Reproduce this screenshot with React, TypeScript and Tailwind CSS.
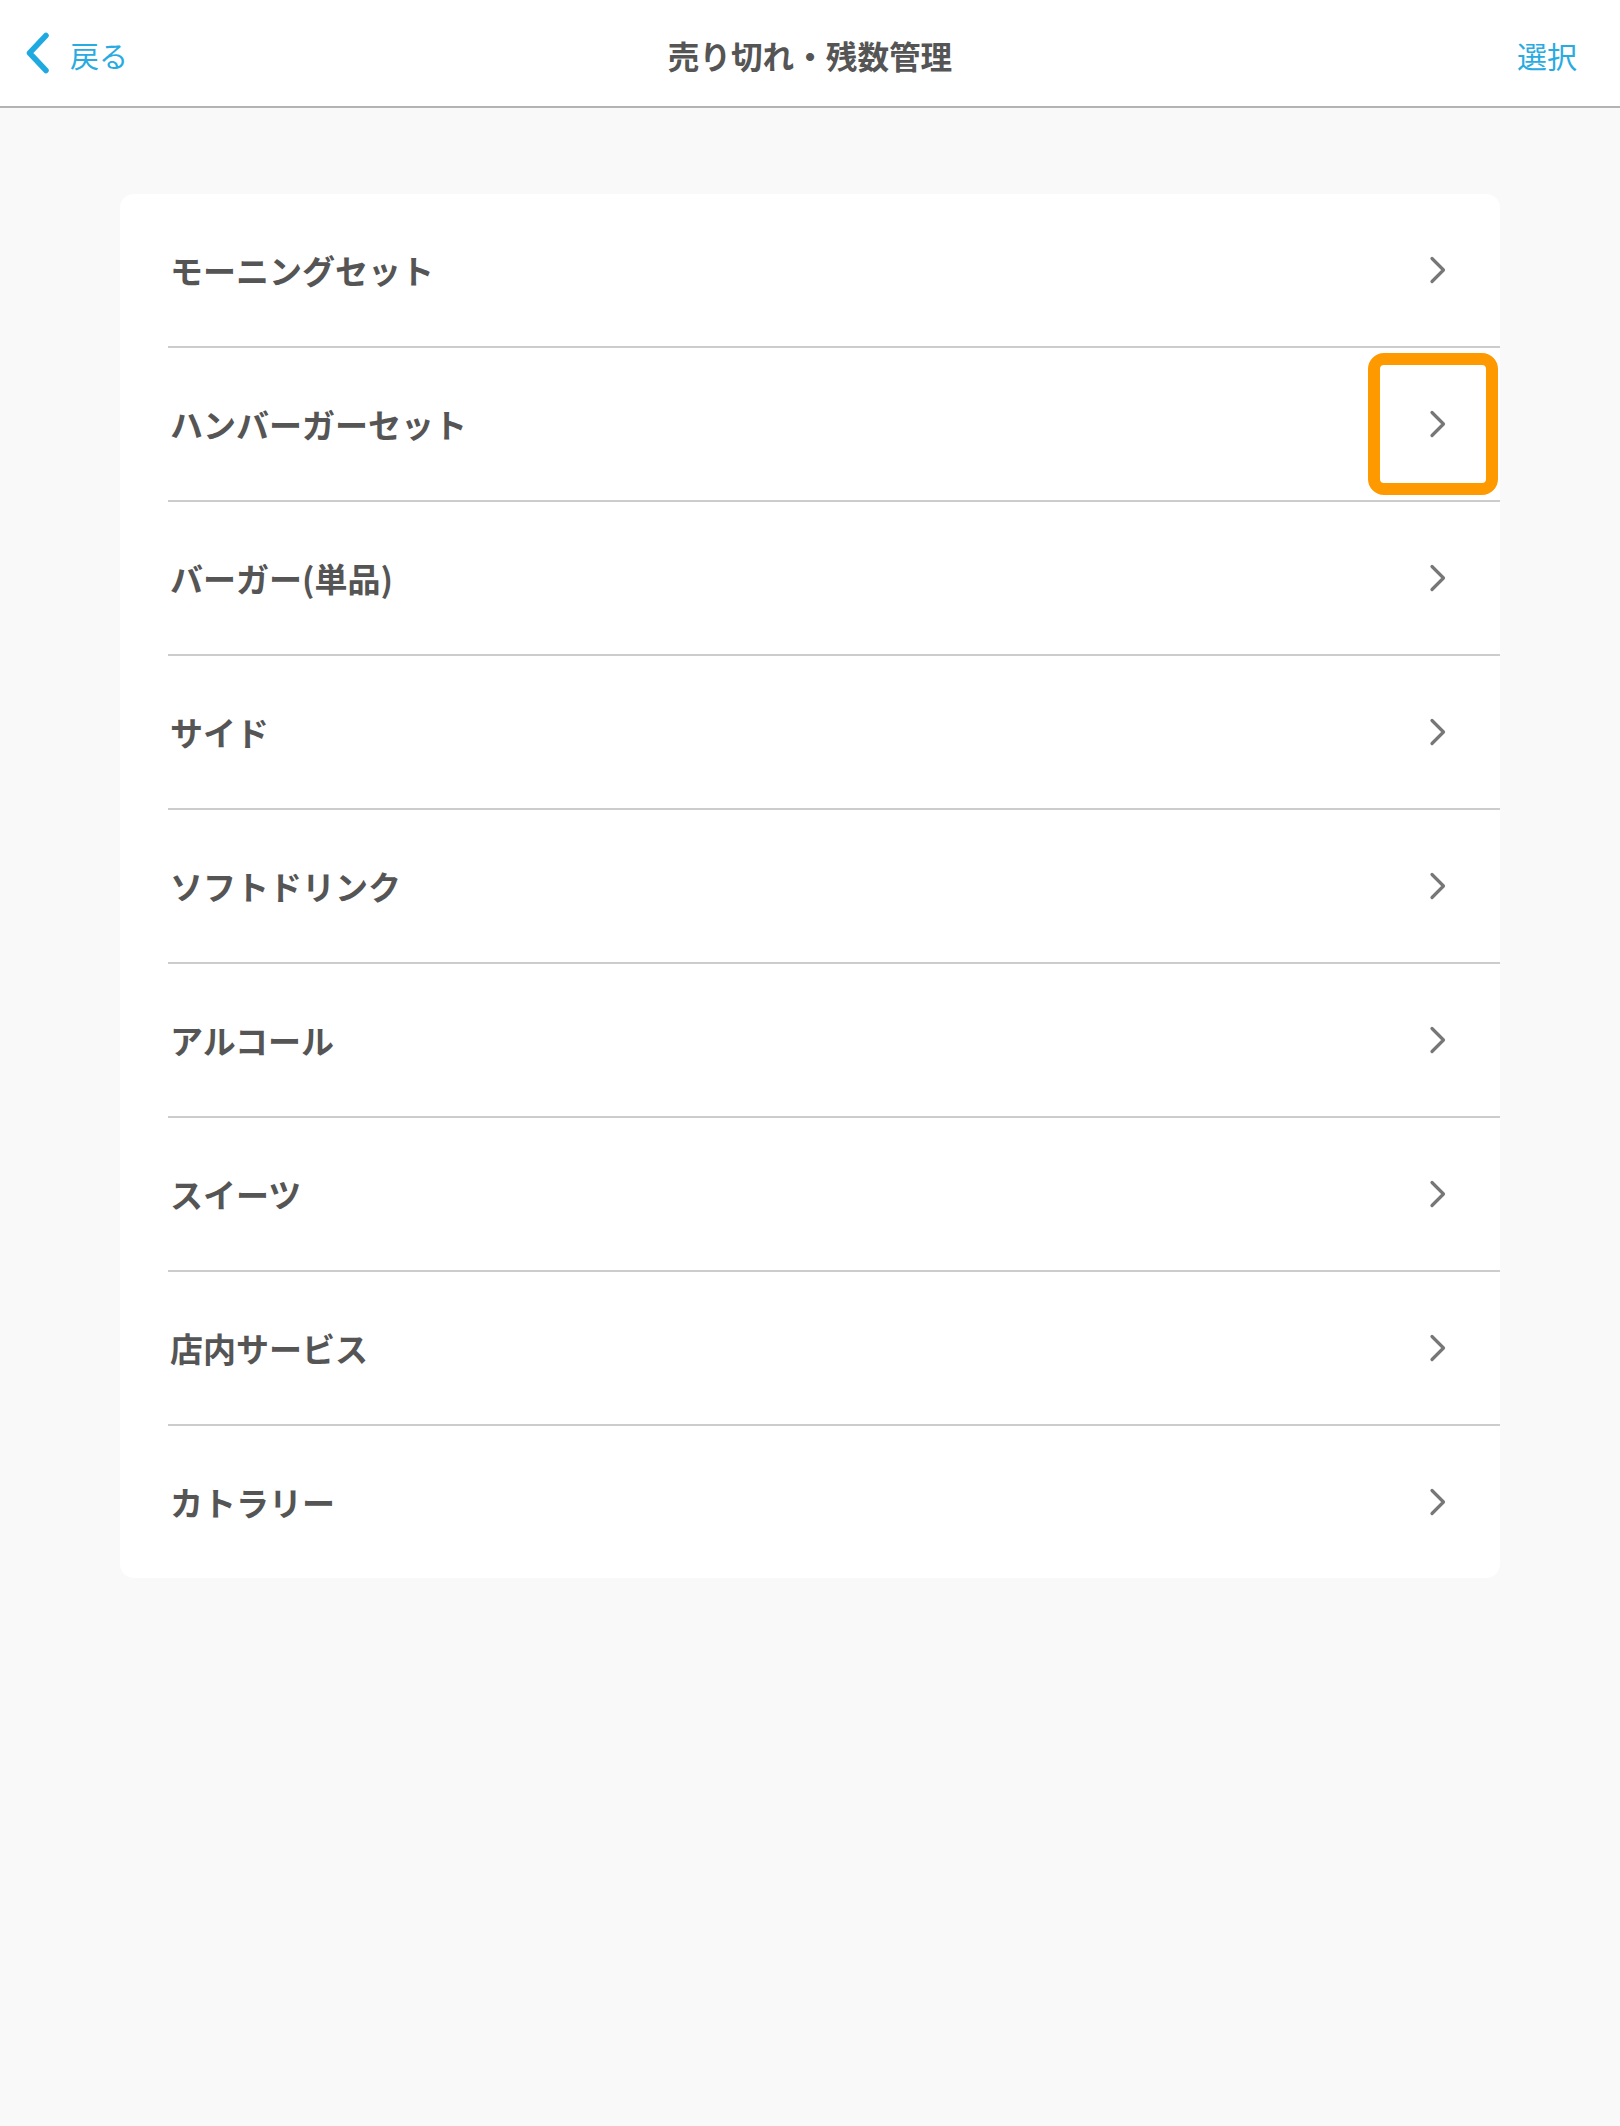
import React from 'react';

const categories = [
  'モーニングセット',
  'ハンバーガーセット',
  'バーガー(単品)',
  'サイド',
  'ソフトドリンク',
  'アルコール',
  'スイーツ',
  '店内サービス',
  'カトラリー',
];

const font = { fontFamily: '"Noto Sans CJK JP", "Noto Sans", sans-serif' };

function ChevronRight() {
  return (
    <svg width="18" height="28" viewBox="0 0 18 28" fill="none">
      <path d="M3 2.5 L14.5 14 L3 25.5" stroke="#777777" strokeWidth="3.2" strokeLinecap="round" strokeLinejoin="round" />
    </svg>
  );
}

function ChevronLeft() {
  return (
    <svg width="26" height="42" viewBox="0 0 26 42" fill="none">
      <path d="M21 3.5 L4.5 21 L21 38.5" stroke="#1fa9e1" strokeWidth="5.5" strokeLinecap="round" strokeLinejoin="round" />
    </svg>
  );
}

export default function App() {
  return (
    <div className="min-h-screen bg-[#f9f9f9]" style={font}>
      <header className="grid h-[108px] grid-cols-[1fr_auto_1fr] items-center border-b-2 border-[#b3b3b3] bg-white px-[25px]">
        <button className="flex items-center gap-[19px] justify-self-start text-[29px] leading-none text-[#29abe2]">
          <ChevronLeft />
          <span className="pt-[4px]">戻る</span>
        </button>
        <h1 className="pt-[6px] text-[31.6px] font-bold leading-none text-[#555555]">売り切れ・残数管理</h1>
        <button className="mr-[18px] justify-self-end pt-[4px] text-[30px] leading-none text-[#29abe2]">選択</button>
      </header>

      <main className="px-[120px] pt-[86px]">
        <div className="overflow-hidden rounded-[14px] bg-white">
          {categories.map((name, i) => (
            <div key={name}>
              {i > 0 && <div className="ml-[48px] h-[2px] bg-[#cccccc]" />}
              <div className="relative flex h-[152px] items-center justify-between pl-[50px] pr-[53px]">
                <span className="text-[33px] font-bold leading-none text-[#555555]">{name}</span>
                <ChevronRight />
                {i === 1 && (
                  <div className="absolute right-[2px] top-[5px] h-[142px] w-[130px] rounded-[16px] border-[12px] border-[#ff9900]" />
                )}
              </div>
            </div>
          ))}
        </div>
      </main>
    </div>
  );
}
